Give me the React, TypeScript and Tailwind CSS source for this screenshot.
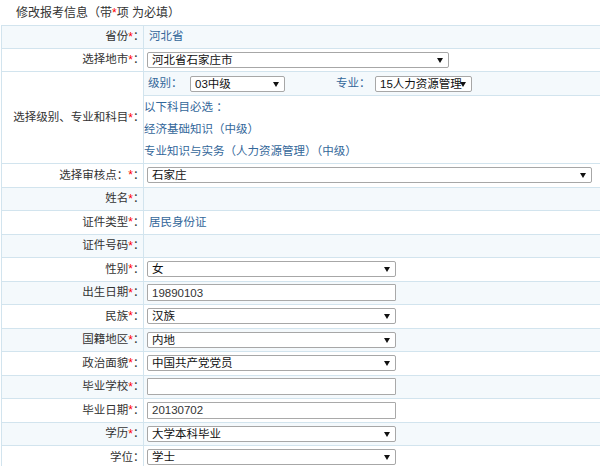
import React from "react";

const LIGHT = "bg-[#f4f9fc]";
const WHITE = "bg-white";

function Label({ text, req = true }: { text: string; req?: boolean }) {
  return (
    <span className="whitespace-nowrap flex items-center">
      <span>{text}</span>
      {req && <span className="text-[#ff0000] text-[12px]">*</span>}
      <span className="inline-block w-[8px] overflow-visible">：</span>
    </span>
  );
}

function Sel({ value, w, textCls = "" }: { value: string; w: string; textCls?: string }) {
  return (
    <div className={`relative h-[16px] ${w} border border-[#a7a7a7] rounded-[2px] bg-white flex items-center`}>
      <div className={`pl-[4px] pr-[14px] overflow-hidden whitespace-nowrap leading-[14px] text-[#111] ${textCls}`}>{value}</div>
      <svg className="absolute right-[5px] top-[5px]" width="6" height="5" viewBox="0 0 6 5">
        <path d="M0 0 H6 L3 5 Z" fill="#111" />
      </svg>
    </div>
  );
}

function Inp({ value, w }: { value: string; w: string }) {
  return (
    <div className={`h-[17px] ${w} border border-[#a9a9a9] rounded-[1px] bg-white flex items-center`}>
      <div className="pl-[4px] leading-[14px] text-[#333]">{value}</div>
    </div>
  );
}

function Row({
  label,
  req = true,
  bg,
  h = "h-[23.5px]",
  children,
}: {
  label: string;
  req?: boolean;
  bg: string;
  h?: string;
  children?: React.ReactNode;
}) {
  return (
    <div className={`flex ${h} border-b border-[#d2e4ee] ${bg}`}>
      <div className="w-[142px] shrink-0 border-r border-[#d2e4ee] flex items-center justify-end pr-[2px] text-[#333]">
        <Label text={label} req={req} />
      </div>
      <div className="flex-1 flex items-center pl-[3px]">{children}</div>
    </div>
  );
}

export default function App() {
  return (
    <div
      className="w-[600px] h-[466px] overflow-hidden bg-white text-[11.5px]"
      style={{ fontFamily: '"Liberation Sans", Arial, "Noto Sans CJK SC", sans-serif' }}
    >
      <div className="h-[25px] pl-[16px] flex items-center text-[#333] text-[12px]">
        <span>
          修改报考信息（带<span className="text-[#ff0000]">*</span>项 为必填）
        </span>
      </div>
      <div className="ml-[1px] border-l border-t border-[#d2e4ee]">
        <Row label="省份" bg={LIGHT} h="h-[23px]">
          <span className="text-[#33679a] pl-[2px]">河北省</span>
        </Row>
        <Row label="选择地市" bg={WHITE} h="h-[23px]">
          <Sel value="河北省石家庄市" w="w-[302px]" />
        </Row>
        <div className="flex h-[92px] border-b border-[#d2e4ee] bg-white">
          <div className="w-[142px] shrink-0 border-r border-[#d2e4ee] flex items-center justify-end pr-[2px] text-[#333]">
            <Label text="选择级别、专业和科目" />
          </div>
          <div className="flex-1 flex flex-col">
            <div className={`h-[24px] border-b border-[#d2e4ee] ${LIGHT} flex items-center pl-[4px]`}>
              <span className="text-[#33679a] w-[42px]">级别：</span>
              <Sel value="03中级" w="w-[95px]" />
              <span className="text-[#33679a] ml-[51px] w-[39px]">专业：</span>
              <Sel value="15人力资源管理" w="w-[97px]" textCls="pr-[10px]" />
            </div>
            <div className="flex-1 flex flex-col text-[#33679a]">
              <div className="flex-1 flex items-center">以下科目必选 ：</div>
              <div className="flex-1 flex items-center">经济基础知识（中级）</div>
              <div className="flex-1 flex items-center">专业知识与实务（人力资源管理）（中级）</div>
            </div>
          </div>
        </div>
        <Row label="选择审核点：" bg={WHITE}>
          <Sel value="石家庄" w="w-[445px]" />
        </Row>
        <Row label="姓名" bg={LIGHT} />
        <Row label="证件类型" bg={WHITE}>
          <span className="text-[#33679a] pl-[2px]">居民身份证</span>
        </Row>
        <Row label="证件号码" bg={LIGHT} />
        <Row label="性别" bg={WHITE}>
          <Sel value="女" w="w-[249px]" />
        </Row>
        <Row label="出生日期" bg={LIGHT}>
          <Inp value="19890103" w="w-[249px]" />
        </Row>
        <Row label="民族" bg={WHITE}>
          <Sel value="汉族" w="w-[249px]" />
        </Row>
        <Row label="国籍地区" bg={LIGHT}>
          <Sel value="内地" w="w-[249px]" />
        </Row>
        <Row label="政治面貌" bg={WHITE}>
          <Sel value="中国共产党党员" w="w-[249px]" />
        </Row>
        <Row label="毕业学校" bg={LIGHT}>
          <Inp value="" w="w-[249px]" />
        </Row>
        <Row label="毕业日期" bg={WHITE}>
          <Inp value="20130702" w="w-[249px]" />
        </Row>
        <Row label="学历" bg={LIGHT}>
          <Sel value="大学本科毕业" w="w-[249px]" />
        </Row>
        <Row label="学位" req={false} bg={WHITE}>
          <Sel value="学士" w="w-[249px]" />
        </Row>
      </div>
    </div>
  );
}
